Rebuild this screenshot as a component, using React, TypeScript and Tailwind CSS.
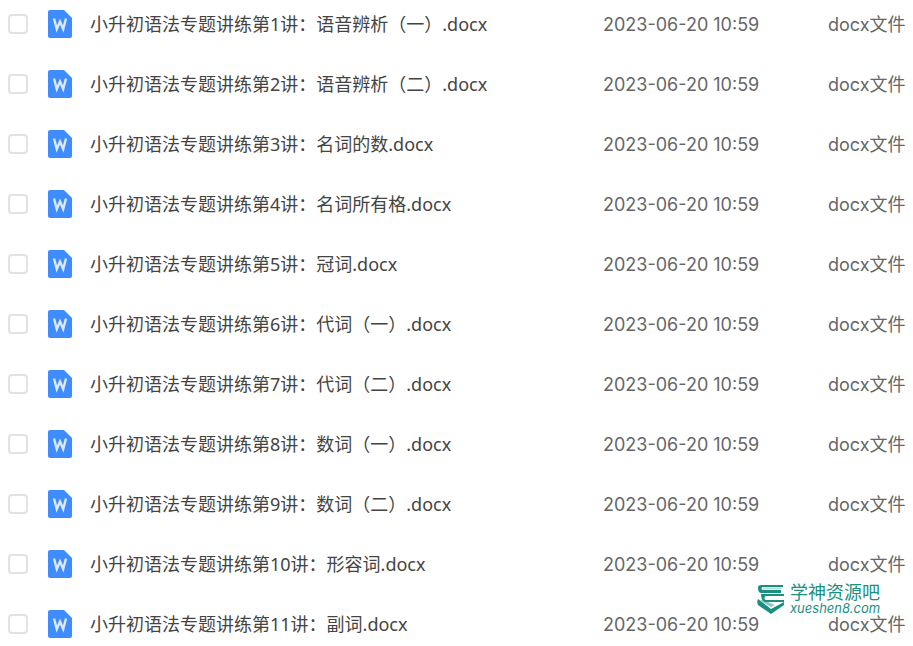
import React from 'react';

const c = '\uFF1A';
const l = '\uFF08';
const r = '\uFF09';

const files = [
  `小升初语法专题讲练第1讲${c}语音辨析${l}一${r}.docx`,
  `小升初语法专题讲练第2讲${c}语音辨析${l}二${r}.docx`,
  `小升初语法专题讲练第3讲${c}名词的数.docx`,
  `小升初语法专题讲练第4讲${c}名词所有格.docx`,
  `小升初语法专题讲练第5讲${c}冠词.docx`,
  `小升初语法专题讲练第6讲${c}代词${l}一${r}.docx`,
  `小升初语法专题讲练第7讲${c}代词${l}二${r}.docx`,
  `小升初语法专题讲练第8讲${c}数词${l}一${r}.docx`,
  `小升初语法专题讲练第9讲${c}数词${l}二${r}.docx`,
  `小升初语法专题讲练第10讲${c}形容词.docx`,
  `小升初语法专题讲练第11讲${c}副词.docx`,
];

const DocIcon = () => (
  <svg width="24" height="28" viewBox="0 0 24 28" className="shrink-0">
    <path d="M2 0H16L24 8V26a2 2 0 0 1-2 2H2a2 2 0 0 1-2-2V2a2 2 0 0 1 2-2Z" fill="#3f8cff" />
    <path d="M6 8.5L8.8 19L12 11.5L15.2 19L18 8.5" fill="none" stroke="#dce9ff" strokeWidth="2.4" />
  </svg>
);

const Logo = () => (
  <svg width="28" height="29" viewBox="0 0 28 29" className="shrink-0">
    <path d="M1 2.5C1 1 2 0 4 0H26V2H6C4 2 4 5 6 5H24V8H5C2 8 1 6 1 2.5Z" fill="#1a8f80" />
    <path d="M6 2.5H24V4.5H6Z" fill="#1a8f80" opacity="0.3" />
    <path d="M4 9H27V11H9C7 11 7 15 9 15H27V17H9C6 17 4 14 4 9Z" fill="#1a8f80" />
    <path d="M1 14L14 24L27 17V20L14 29L1 20C0 18 0 16 1 14Z" fill="#1a8f80" />
    <path d="M3 15.5L14 22L18 20L6 15Z" fill="#1a8f80" opacity="0.5" />
  </svg>
);

export default function App() {
  return (
    <div className="relative w-[913px] h-[646px] overflow-hidden bg-white font-['Inter','Noto_Sans_CJK_SC',sans-serif]">
      <div className="flex flex-col -mt-[6px]">
        {files.map((name) => (
          <div key={name} className="flex items-center h-[60px] shrink-0 text-[18px] text-[#666]">
            <div className="ml-[8px] w-[20px] h-[20px] rounded-[4px] border-2 border-[#e2e2e2] shrink-0" />
            <div className="ml-[20px]">
              <DocIcon />
            </div>
            <div className="ml-[18px] w-[513px] whitespace-nowrap text-[#444] font-['Noto_Sans','Noto_Sans_CJK_SC',sans-serif]">{name}</div>
            <div className="w-[225px] whitespace-nowrap">2023-06-20 10:59</div>
            <div className="whitespace-nowrap">docx文件</div>
          </div>
        ))}
      </div>
      <div className="absolute left-[757px] top-[584px] flex items-center gap-[5px]">
        <Logo />
        <div className="flex flex-col text-[#1a8f80]">
          <span className="text-[18px] leading-[17px] whitespace-nowrap">学神资源吧</span>
          <span className="text-[13px] leading-[14px] italic whitespace-nowrap">xueshen8.com</span>
        </div>
      </div>
    </div>
  );
}
